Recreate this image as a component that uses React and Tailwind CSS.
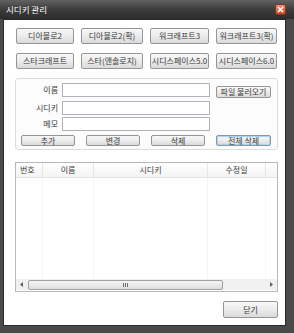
import React from "react";

const font = { fontFamily: '"Noto Sans CJK KR", "Noto Sans", sans-serif' };

function Btn({ children, className = "" }) {
  return (
    <div
      className={
        "flex items-center justify-center rounded-[2px] border border-[#959595] bg-gradient-to-b from-[#f8f8f8] via-[#ececec] to-[#dadada] text-[8px] leading-none text-[#3a3a3a] " +
        className
      }
    >
      {children}
    </div>
  );
}

export default function App() {
  return (
    <div className="w-[294px] h-[333px] bg-[#4a4a4a] flex flex-col" style={font}>
      <div className="h-[19px] shrink-0 bg-gradient-to-b from-[#626262] via-[#3c3c3c] to-[#2c2c2c] flex items-center justify-between pl-[6px] pr-[8px]">
        <span className="text-[8.5px] text-white leading-none">시디키 관리</span>
        <div className="w-[11px] h-[11px] rounded-[2px] bg-gradient-to-b from-[#ee9070] to-[#c94a22] border border-[#7a3a25] flex items-center justify-center">
          <svg width="7" height="7" viewBox="0 0 7 7">
            <path d="M1 1 L6 6 M6 1 L1 6" stroke="white" strokeWidth="1.6" />
          </svg>
        </div>
      </div>
      <div className="flex-1 ml-[3px] mr-[8px] mb-[7px] bg-white border border-[#2a2a2a] flex flex-col pl-[11px] pr-[7px] pt-[8px]">
        <div className="grid grid-cols-[58px_62px_59px_61px] gap-x-[7px] gap-y-[9px] pl-[1px]">
          <Btn className="h-[16px]">디아블로2</Btn>
          <Btn className="h-[16px]">디아블로2(확)</Btn>
          <Btn className="h-[16px]">워크래프트3</Btn>
          <Btn className="h-[16px]">워크래프트3(확)</Btn>
          <Btn className="h-[16px]">스타크래프트</Btn>
          <Btn className="h-[16px]">스타(앤솔로지)</Btn>
          <Btn className="h-[16px]">시디스페이스5.0</Btn>
          <Btn className="h-[16px]">시디스페이스6.0</Btn>
        </div>

        <div className="mt-[9px] h-[72px] rounded-[3px] border border-[#dcdcdc] bg-[#fcfcfc] pt-[4px] flex flex-col">
          <div className="flex items-start">
            <div className="w-[42px] h-[14px] flex items-center justify-end text-[8px] text-[#3a3a3a]">이름</div>
            <div className="ml-[4px] w-[148px] h-[14px] border border-[#b0b2b8] bg-white" />
            <Btn className="ml-[6px] mt-[3px] w-[55px] h-[12px]">파일 불러오기</Btn>
          </div>
          <div className="flex items-start mt-[3px]">
            <div className="w-[42px] h-[14px] flex items-center justify-end text-[8px] text-[#3a3a3a]">시디키</div>
            <div className="ml-[4px] w-[148px] h-[14px] border border-[#b0b2b8] bg-white" />
          </div>
          <div className="flex items-start mt-[2px]">
            <div className="w-[42px] h-[14px] flex items-center justify-end text-[8px] text-[#3a3a3a]">메모</div>
            <div className="ml-[4px] w-[148px] h-[14px] border border-[#b0b2b8] bg-white" />
          </div>
          <div className="flex mt-[4px] pl-[5px] gap-[11px]">
            <Btn className="w-[54px] h-[11px]">추가</Btn>
            <Btn className="w-[54px] h-[11px]">변경</Btn>
            <Btn className="w-[54px] h-[11px]">삭제</Btn>
            <Btn className="w-[55px] h-[11px] border-[#3c9ad8] ring-1 ring-inset ring-[#a6d6f3]">전체 삭제</Btn>
          </div>
        </div>

        <div className="mt-[12px] h-[130px] border border-[#b8b8b8] bg-white flex flex-col">
          <div className="h-[15px] flex border-b border-[#e3e3e3] bg-gradient-to-b from-white to-[#f4f4f4] text-[8px] text-[#3a3a3a]">
            <div className="w-[27px] flex items-center pl-[4px] border-r border-[#e6e6e6]">번호</div>
            <div className="w-[51px] flex items-center justify-center border-r border-[#e6e6e6]">이름</div>
            <div className="w-[114px] flex items-center justify-center border-r border-[#e6e6e6]">시디키</div>
            <div className="w-[58px] flex items-center justify-center border-r border-[#e6e6e6]">수정일</div>
            <div className="flex-1" />
          </div>
          <div className="flex-1 flex">
            <div className="w-[27px] border-r border-[#f5f5f5]" />
            <div className="w-[51px] border-r border-[#f5f5f5]" />
            <div className="w-[114px] border-r border-[#f5f5f5]" />
            <div className="w-[58px] border-r border-[#f5f5f5]" />
            <div className="flex-1" />
          </div>
          <div className="h-[11px] mb-[1px] bg-[#f0f0f0] flex items-center">
            <div className="w-[12px] flex items-center justify-center">
              <svg width="4" height="5" viewBox="0 0 4 5"><path d="M3 0 L0 2.5 L3 5 Z" fill="#606060" /></svg>
            </div>
            <div className="w-[195px] h-[10px] rounded-[2px] border border-[#a0a0a0] bg-gradient-to-b from-[#f4f4f4] to-[#dedede] flex items-center justify-center">
              <svg width="5" height="4" viewBox="0 0 5 4"><path d="M0.5 0 V4 M2.5 0 V4 M4.5 0 V4" stroke="#707070" strokeWidth="1" /></svg>
            </div>
            <div className="flex-1" />
            <div className="w-[12px] flex items-center justify-center">
              <svg width="4" height="5" viewBox="0 0 4 5"><path d="M1 0 L4 2.5 L1 5 Z" fill="#606060" /></svg>
            </div>
          </div>
        </div>

        <div className="flex justify-end mt-[9px]">
          <Btn className="w-[55px] h-[17px] text-[8.5px]">닫기</Btn>
        </div>
      </div>
    </div>
  );
}
